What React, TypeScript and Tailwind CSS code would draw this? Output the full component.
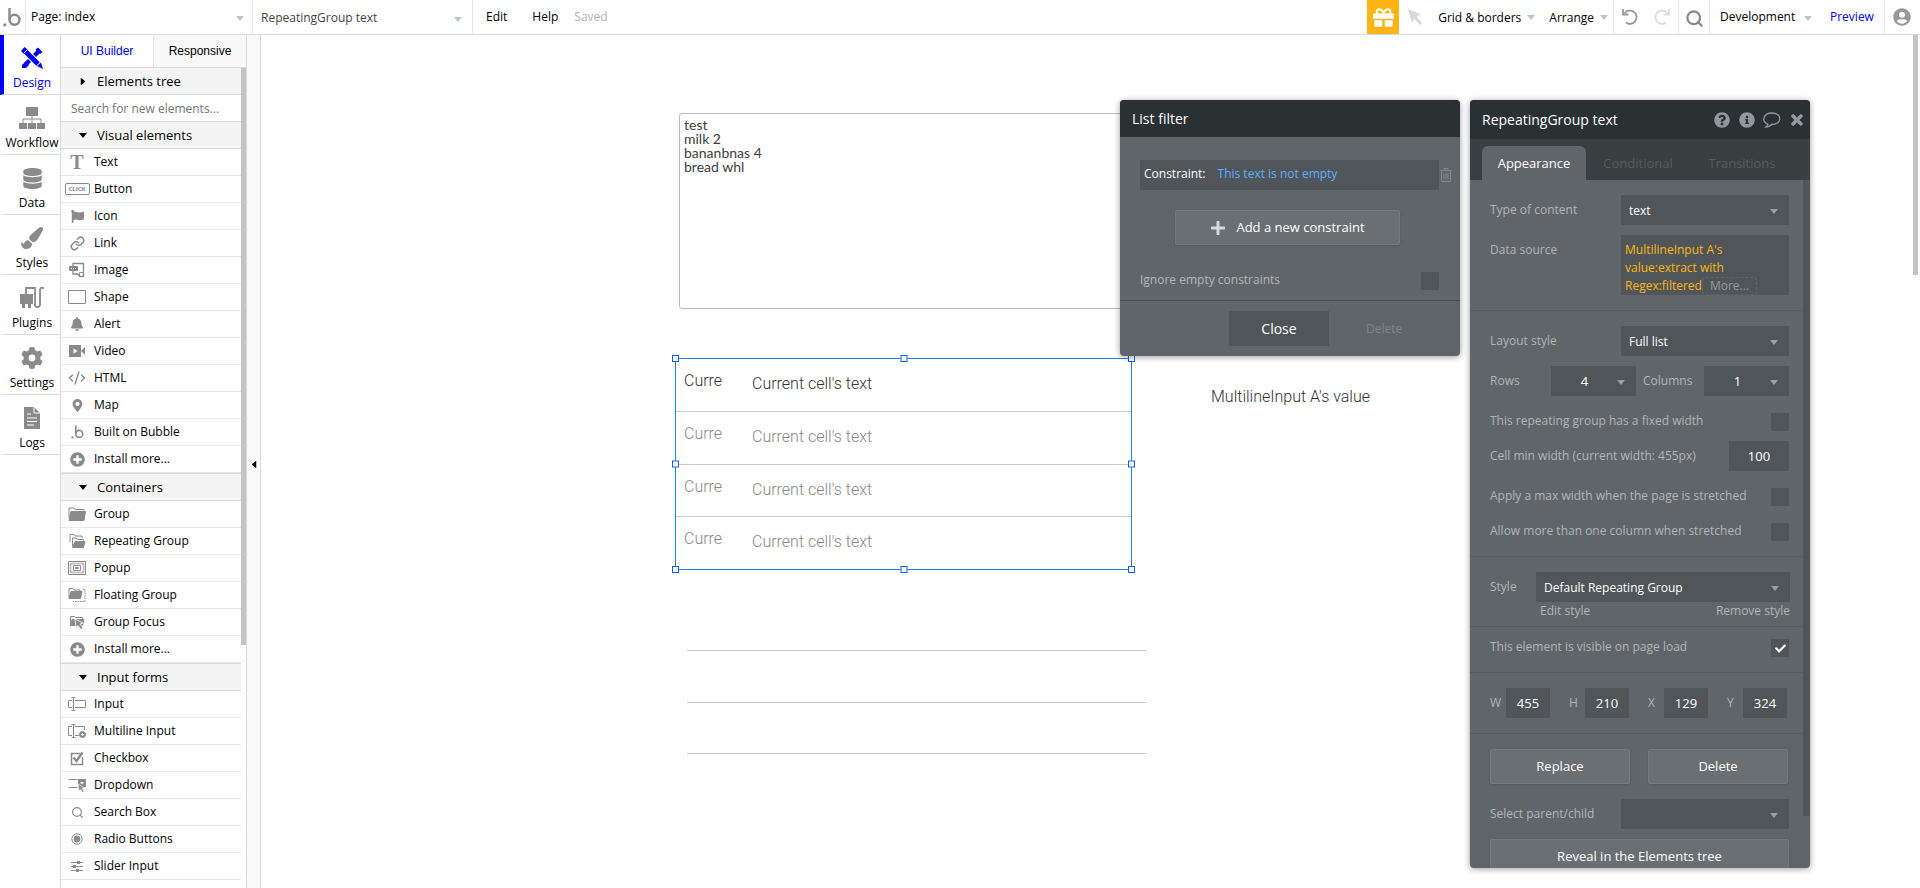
import { ReactNode } from "react";
import {
  FaBell,
  FaCheck,
  FaDatabase,
  FaFlag,
  FaGift,
  FaInfoCircle,
  FaMapMarkerAlt,
  FaPaintBrush,
  FaPlus,
  FaPlusCircle,
  FaQuestionCircle,
  FaTimes,
  FaUserCircle,
} from "react-icons/fa";
import { FaGear } from "react-icons/fa6";
import { CodeXml, Link, Search } from "lucide-react";

type ChildrenProps = { children?: ReactNode };

const BubbleLogo = ({ className }: { className: string }) => (
  <svg viewBox="0 0 18 20" className={className} fill="none">
    <path d="M6.5 1v11.5" stroke="currentColor" strokeWidth="2.4" />
    <circle cx="11.5" cy="12.8" r="5" stroke="currentColor" strokeWidth="2.4" />
    <circle cx="1.8" cy="17.8" r="1.6" fill="currentColor" />
  </svg>
);

const Caret = ({ className }: { className: string }) => (
  <svg viewBox="0 0 8 5" className={`h-[5px] w-2 ${className}`}>
    <path d="M0 0h8L4 5z" fill="currentColor" />
  </svg>
);

// ---------- top bar ----------

const ArrowIcon = () => (
  <svg viewBox="0 0 14 16" className="h-4 w-3.5 text-[#d9d9d9]">
    <path d="M0 0l13 5.5-4.5 2.3 5.500 6.200-2.200 2-5.500-6.200L4 14z" fill="currentColor" />
  </svg>
);

const UndoIcon = ({ className }: { className: string }) => (
  <svg viewBox="0 0 16 18" className={`h-[18px] w-4 ${className}`} fill="none">
    <path
      d="M2.500 5.500A6.600 6.600 0 1 1 4 14.500"
      stroke="currentColor"
      strokeWidth="1.800"
    />
    <path d="M1 1v5.500h5.500" stroke="currentColor" strokeWidth="1.800" />
  </svg>
);

const TopBar = () => {
  return (
    <header className="flex h-[35px] shrink-0 items-stretch border-b border-[#dadada] bg-white text-black">
      <a
        href="#home"
        aria-label="Home"
        className="flex w-[26px] items-center border-r border-[#e4e8ea] pl-[3px] text-[#8a8a8a]"
      >
        <BubbleLogo className="h-5 w-[18px]" />
      </a>
      <div className="relative w-[227px] border-r border-[#e4e8ea]">
        <select
          aria-label="Page"
          className="h-full w-full appearance-none pl-[5px] outline-none"
        >
          <option>Page: index</option>
        </select>
        <Caret className="pointer-events-none absolute top-4 right-2 text-[#bcc5cb]" />
      </div>
      <div className="relative w-[220px] border-r border-[#e4e8ea]">
        <select
          aria-label="Element"
          className="h-full w-full appearance-none pt-px pl-2 text-[#444] outline-none"
        >
          <option>RepeatingGroup text</option>
        </select>
        <Caret className="pointer-events-none absolute top-[17px] right-2.5 text-[#bcc5cb]" />
      </div>
      <button className="pl-[13px]">Edit</button>
      <button className="pl-[25px]">Help</button>
      <span className="self-center pl-4 text-[#b3b3b3]">Saved</span>

      <div className="ml-auto flex items-stretch">
        <button
          aria-label="Rewards"
          className="flex w-8 items-center justify-center bg-[#fdb515] text-white"
        >
          <FaGift size={21} />
        </button>
        <button aria-label="Select" className="pr-4 pl-[9px]">
          <ArrowIcon />
        </button>
        <button className="flex items-center gap-1.5 pt-px">
          Grid &amp; borders <Caret className="text-[#bcc5cb]" />
        </button>
        <button className="flex items-center gap-1.5 border-r border-[#e4e8ea] pt-px pr-[5px] pl-3.5">
          Arrange <Caret className="text-[#bcc5cb]" />
        </button>
        <div className="flex w-[65px] items-center gap-4 border-r border-[#e4e8ea] pl-2">
          <button aria-label="Undo">
            <UndoIcon className="text-[#999]" />
          </button>
          <button aria-label="Redo">
            <UndoIcon className="-scale-x-100 text-[#dcdcdc]" />
          </button>
        </div>
        <button
          aria-label="Search"
          className="flex w-[31px] items-center justify-center border-r border-[#e4e8ea] pt-0.5 text-[#8a8a8a]"
        >
          <Search size={19} strokeWidth={2.8} />
        </button>
        <div className="relative w-[110px]">
          <select
            aria-label="Version"
            className="h-full w-full appearance-none pl-2.5 outline-none"
          >
            <option>Development</option>
          </select>
          <Caret className="pointer-events-none absolute top-4 right-2 text-[#bcc5cb]" />
        </div>
        <a
          href="#preview"
          className="flex w-[65px] items-center border-r border-[#e4e8ea] pl-2.5 text-[#0000ee]"
        >
          Preview
        </a>
        <button aria-label="Account" className="w-[35px] pl-2 text-[#999]">
          <FaUserCircle size={18} />
        </button>
      </div>
    </header>
  );
};

// ---------- main navigation ----------

const DesignIcon = () => (
  <svg viewBox="0 0 24 24" className="h-6 w-6" fill="none">
    <path d="M6 18L19 5" stroke="currentColor" strokeWidth="4.500" />
    <path d="M2 19l3.500-3.500 3.500 3.500L6 22H2z" fill="currentColor" />
    <path d="M18 1.500l4.500 4.500-2.500 2-4.500-4.500z" fill="currentColor" />
    <path d="M4 4l15 15" stroke="#fff" strokeWidth="7" />
    <path d="M5 5l13 13" stroke="currentColor" strokeWidth="5" />
    <path d="M1 5l3.500-4 3 2.500L4 8z" fill="currentColor" />
    <path d="M17 20l4-3.500 2 6.500z" fill="currentColor" />
    <path d="M3.500 7.500l4-4" stroke="#fff" />
  </svg>
);

const WorkflowIcon = () => (
  <svg viewBox="0 0 28 24" className="h-6 w-7" fill="none">
    <path d="M8 1h12v9H8zM1 17h8v6H1zM10 17h8v6h-8zM19 17h8v6h-8z" fill="currentColor" />
    <path d="M14 10v7M5 17v-4h18v4" stroke="currentColor" />
  </svg>
);

const PluginsIcon = () => (
  <svg viewBox="0 0 26 24" className="h-6 w-[26px]" fill="none">
    <path d="M1 8h13v10h-2v4H9v-4H6v4H3v-4H1z" fill="currentColor" />
    <path
      d="M7 8V2h9v16.500a2.500 2.500 0 0 0 5 0V4c0-3 3-2 4-2"
      stroke="currentColor"
      strokeWidth="1.800"
    />
  </svg>
);

const LogsIcon = () => (
  <svg viewBox="0 0 18 22" className="h-[22px] w-[18px]" fill="none">
    <path d="M1 0h10l6 6v16H1z" fill="currentColor" />
    <path d="M11 0v6h6M4 7h4M4 11h10M4 14.500h10M4 18h7" stroke="#fff" />
  </svg>
);

const navItems = [
  { label: "Design", icon: <DesignIcon /> },
  { label: "Workflow", icon: <WorkflowIcon /> },
  { label: "Data", icon: <FaDatabase size={21} /> },
  { label: "Styles", icon: <FaPaintBrush size={22} /> },
  { label: "Plugins", icon: <PluginsIcon /> },
  { label: "Settings", icon: <FaGear size={22} /> },
  { label: "Logs", icon: <LogsIcon /> },
];

const MainNav = () => {
  return (
    <nav className="w-[61px] shrink-0 border-r border-[#dadada] bg-white">
      {navItems.map((item, index) => (
        <a
          key={item.label}
          href={`#${item.label.toLowerCase()}`}
          className={`flex h-[60px] flex-col items-center justify-end border-b border-l-4 border-b-[#dadada] pb-0.5 ${
            index === 0
              ? "border-l-[#0000ee] text-[#0000ee]"
              : "border-l-transparent text-[#8a8a8a]"
          }`}
        >
          <span className="flex h-6 items-center">{item.icon}</span>
          <span className={`mt-1 leading-[18px] ${index === 0 ? "" : "text-black"}`}>
            {item.label}
          </span>
        </a>
      ))}
    </nav>
  );
};

// ---------- element palette ----------

const Glyph = ({ children }: ChildrenProps) => (
  <svg viewBox="0 0 18 16" className="h-4 w-[18px]" fill="none" stroke="currentColor">
    {children}
  </svg>
);

const visualElements = [
  {
    label: "Text",
    icon: (
      <span className="font-['Liberation_Serif',serif] text-xl leading-none font-bold">
        T
      </span>
    ),
  },
  {
    label: "Button",
    icon: (
      <span className="h-3 w-[25px] rounded-xs border border-[#8a8a8a] text-center text-[6px] leading-[10px] font-bold">
        CLICK
      </span>
    ),
  },
  { label: "Icon", icon: <FaFlag size={13} /> },
  { label: "Link", icon: <Link size={15} strokeWidth={2.4} /> },
  {
    label: "Image",
    icon: (
      <Glyph>
        <path d="M5 4V1.500h10.500v13H12l-3-3M5 9v3h4.500" strokeWidth="1.300" />
        <path d="M11.500 14.500v-4h4" />
        <path d="M1.500 4.500h8v4h-8z" fill="currentColor" />
        <path d="M3 6.500h1M5 6.500h1M7 6.500h1" stroke="#fff" />
      </Glyph>
    ),
  },
  {
    label: "Shape",
    icon: (
      <Glyph>
        <path d="M.5 1.500h17v13H.5z" />
      </Glyph>
    ),
  },
  { label: "Alert", icon: <FaBell size={14} /> },
  {
    label: "Video",
    icon: (
      <Glyph>
        <path d="M1 2h12v12H1zM13 8l4-4v8z" fill="currentColor" stroke="none" />
        <path d="M5.500 5.500l4 2.500-4 2.500z" fill="#fff" stroke="none" />
      </Glyph>
    ),
  },
  { label: "HTML", icon: <CodeXml size={18} strokeWidth={1.8} /> },
  { label: "Map", icon: <FaMapMarkerAlt size={13} /> },
  { label: "Built on Bubble", icon: <BubbleLogo className="h-3.5 w-[13px]" /> },
  { label: "Install more...", icon: <FaPlusCircle size={15} /> },
];

const containers = [
  {
    label: "Group",
    icon: (
      <Glyph>
        <path d="M1 12V2h5l1 1.500h9V6" />
        <path d="M3 5.500h14.500L16 14.500H1z" fill="currentColor" />
      </Glyph>
    ),
  },
  {
    label: "Repeating Group",
    icon: (
      <Glyph>
        <path d="M2 9V1.500h4l1 1.500h7v2" />
        <path d="M4.500 13V5h4l1 1.500h6v2" />
        <path d="M7 8.500h10l-1.500 6H4.500z" fill="currentColor" />
      </Glyph>
    ),
  },
  {
    label: "Popup",
    icon: (
      <Glyph>
        <path d="M.5 1.500h17v13H.5z" />
        <path d="M2.500 3.500h13v9h-13z" strokeDasharray="1 1" strokeWidth="2" />
        <path d="M5.500 5.500h7v5h-7zM7.500 7.500h3v1h-3z" />
      </Glyph>
    ),
  },
  {
    label: "Floating Group",
    icon: (
      <Glyph>
        <path d="M1 11V1.500h4l1 1.500h6V5" />
        <path d="M3 4.500h11l-1.500 7H1z" fill="currentColor" />
        <path d="M15 2.500h2v12H5V13" strokeDasharray="1.500 1" />
      </Glyph>
    ),
  },
  {
    label: "Group Focus",
    icon: (
      <Glyph>
        <path d="M2.500 11V2.500h4l1 1h7V6" />
        <path d="M4 5.500h12l-1.500 6H2.500z" fill="currentColor" />
        <path
          d="M7 5l8 4-3 1 3 4-2 1.500-3-4-2 2z"
          fill="currentColor"
          stroke="#fff"
          strokeWidth=".8"
        />
      </Glyph>
    ),
  },
  { label: "Install more...", icon: <FaPlusCircle size={15} /> },
];

const inputForms = [
  {
    label: "Input",
    icon: (
      <Glyph>
        <path d="M4 4.500H.5v7H4M7 4.500h10.500v7H7M3.500 1.500h4M3.500 14.500h4M5.500 1.500v13" />
      </Glyph>
    ),
  },
  {
    label: "Multiline Input",
    icon: (
      <Glyph>
        <path d="M4 3.500H.5v9H4M7 3.500h9.500V7M7 12.500h4M3.500 1.500h4M3.500 14.500h4M5.500 1.500v13" />
        <circle cx="14.500" cy="11.500" r="3" fill="currentColor" />
        <path d="M13 11.500h3M14.500 10v3" stroke="#fff" />
      </Glyph>
    ),
  },
  {
    label: "Checkbox",
    icon: (
      <Glyph>
        <path d="M14.500 7v7.500h-11v-11h9" strokeWidth="1.500" />
        <path d="M5.500 7.500L8.500 11l6-8.500" strokeWidth="2.400" />
      </Glyph>
    ),
  },
  {
    label: "Dropdown",
    icon: (
      <Glyph>
        <path d="M.5 2.500h9M.5 10.500h9" />
        <path d="M10 2h8v8h-8z" fill="currentColor" stroke="none" />
        <path d="M12 5h4l-2 2.500z" fill="#fff" stroke="none" />
        <path
          d="M10 7l6 4-2 .5 2 3-1.500 1-2-3-1.500 1.500z"
          fill="currentColor"
          stroke="#fff"
          strokeWidth=".6"
        />
      </Glyph>
    ),
  },
  { label: "Search Box", icon: <Search size={13} strokeWidth={2.2} /> },
  {
    label: "Radio Buttons",
    icon: (
      <Glyph>
        <circle cx="9" cy="8" r="5.200" />
        <circle cx="9" cy="8" r="3" fill="currentColor" />
      </Glyph>
    ),
  },
  {
    label: "Slider Input",
    icon: (
      <Glyph>
        <path d="M3 4.500h12M3 8.500h12M3 12.500h12" />
        <path d="M9 3h3v3H9zM5 7h3v3H5zM8 11h3v3H8z" fill="currentColor" stroke="none" />
      </Glyph>
    ),
  },
];

type PaletteGroupProps = {
  title: string;
  items: { label: string; icon: ReactNode }[];
};

const PaletteGroup = ({ title, items }: PaletteGroupProps) => {
  return (
    <section>
      <button className="flex h-7 w-full items-center gap-2.5 border-y border-[#dadada] bg-[#f4f4f4] pt-px pl-[18px] text-[13px]">
        <Caret className="text-black" />
        {title}
      </button>
      <ul>
        {items.map((item) => (
          <li
            key={item.label}
            className="flex h-[27px] items-center gap-1 border-b border-[#e8e8e8] pl-[3px]"
          >
            <span className="flex w-[26px] items-center justify-center text-[#8a8a8a]">
              {item.icon}
            </span>
            {item.label}
          </li>
        ))}
      </ul>
    </section>
  );
};

const Palette = () => {
  return (
    <aside className="flex w-[186px] shrink-0 flex-col border-r border-[#dadada] bg-white text-black">
      <div className="flex h-[33px] shrink-0 border-b border-[#dadada] font-['Liberation_Sans',sans-serif]">
        <button className="w-[93px] border-r border-[#e4e4e4] text-[#0000ee]">
          UI Builder
        </button>
        <button className="flex-1 bg-[#f8f8f8]">Responsive</button>
      </div>
      <div className="flex min-h-0 flex-1 overflow-hidden">
        <div className="flex-1">
          <button className="flex h-[27px] w-full items-center gap-2.5 border-b border-[#dadada] bg-[#f4f4f4] pt-px pl-[18px] text-[13px]">
            <Caret className="-rotate-90 text-black" />
            Elements tree
          </button>
          <input
            type="search"
            aria-label="Search for new elements"
            placeholder="Search for new elements..."
            className="h-[26px] w-full pl-2.5 outline-none placeholder:text-[#757575]"
          />
          <PaletteGroup title="Visual elements" items={visualElements} />
          <PaletteGroup title="Containers" items={containers} />
          <PaletteGroup title="Input forms" items={inputForms} />
        </div>
        <div className="h-[577px] w-[5px] bg-[#c4c4c4]" />
      </div>
    </aside>
  );
};

// ---------- page canvas ----------

const handles = [
  "-top-1 -left-1",
  "-top-1 left-1/2 -translate-x-1/2",
  "-top-1 -right-1",
  "top-1/2 -left-1 -translate-y-1/2",
  "top-1/2 -right-1 -translate-y-1/2",
  "-bottom-1 -left-1",
  "-bottom-1 left-1/2 -translate-x-1/2",
  "-bottom-1 -right-1",
];

const RepeatingGroup = () => {
  return (
    <div className="absolute top-[323px] left-[414px] flex h-[212px] w-[457px] flex-col border border-[#1a86e0] text-base leading-5 font-light">
      {[0, 1, 2, 3].map((row) => (
        <div
          key={row}
          className={`flex flex-1 border-[#c8c8c8] pt-3 pl-2 ${
            row === 0 ? "text-[#333]" : "border-t text-[#888]"
          }`}
        >
          <span className="w-[68px]">Curre</span>
          <span className="pt-[3px]">Current cell&apos;s text</span>
        </div>
      ))}
      {handles.map((place) => (
        <span
          key={place}
          className={`absolute h-[7px] w-[7px] border border-[#0f62fe] bg-white ${place}`}
        />
      ))}
    </div>
  );
};

// ---------- property editors ----------

const fieldStyle = "rounded-[1px] bg-[#505559] font-medium text-white outline-none";
const raisedStyle =
  "h-[35px] rounded-xs border border-[#74797d] bg-[#6a6f73] text-[13px] font-medium text-white shadow-sm";

type SelectProps = {
  label: string;
  value: string;
  className: string;
  center?: boolean;
};

const Select = ({ label, value, className, center }: SelectProps) => {
  return (
    <div className={`relative h-[30px] ${className}`}>
      <select
        id={label}
        className={`h-full w-full appearance-none pt-px ${fieldStyle} ${
          center ? "pr-[18px] text-center text-[13px]" : "pl-2"
        }`}
      >
        <option>{value}</option>
      </select>
      <Caret className="pointer-events-none absolute top-3.5 right-[11px] text-[#9ba0a3]" />
    </div>
  );
};

type CheckRowProps = { label: string; checked?: boolean };

const CheckRow = ({ label, checked }: CheckRowProps) => {
  return (
    <label className="flex h-[18px] items-center justify-between">
      <span className="pb-0.5">{label}</span>
      <span className="relative h-[18px] w-[18px]">
        <input
          type="checkbox"
          defaultChecked={checked}
          className="block h-[18px] w-[18px] appearance-none rounded-[1px] bg-[#505559]"
        />
        {checked && (
          <FaCheck
            size={11}
            className="pointer-events-none absolute top-1 left-1 text-white"
          />
        )}
      </span>
    </label>
  );
};

const TrashIcon = () => (
  <svg viewBox="0 0 12 14" className="h-3.5 w-3" fill="none" stroke="currentColor">
    <path d="M0 2.500h12M4 2.500v-2h4v2M1.500 3v10.500h9V3M4 5v6.500M6 5v6.500M8 5v6.500" />
  </svg>
);

const ListFilter = () => {
  return (
    <section className="absolute top-[65px] right-[460px] w-[340px] overflow-hidden rounded-[4px] bg-[#606569] text-[#b1b5b8] shadow-[0_1px_6px_rgba(0,0,0,0.4)]">
      <h2 className="flex h-[37px] items-center bg-[#293133] pt-px pl-3 text-sm text-white">
        List filter
      </h2>
      <div className="pt-[23px] pr-[21px] pb-2.5 pl-5">
        <div className="-mr-[13px] flex items-center">
          <div className="flex h-[30px] flex-1 items-start gap-3 bg-[#505559] px-1 pt-1.5">
            <span className="font-medium text-white">Constraint:</span>
            <a href="#constraint" className="text-[#5fb0ff]">
              This text is not empty
            </a>
          </div>
          <button aria-label="Delete constraint" className="pl-px text-[#81868a]">
            <TrashIcon />
          </button>
        </div>
        <button
          className={`mt-5 ml-[35px] flex w-[225px] items-center justify-center gap-2.5 ${raisedStyle}`}
        >
          <FaPlus size={16} className="text-[#d6d8d9]" />
          Add a new constraint
        </button>
        <div className="mt-[27px]">
          <CheckRow label="Ignore empty constraints" />
        </div>
      </div>
      <div className="flex border-t border-[#4e4c4e] py-2.5 pl-[109px]">
        <button className="h-[35px] w-[100px] bg-[#505559] text-sm text-white">
          Close
        </button>
        <button className="pl-[37px] text-[#7f8488]">Delete</button>
      </div>
    </section>
  );
};

const Section = ({ children }: ChildrenProps) => (
  <div className="border-b border-[#565b5f] py-[15px] pr-3.5 pl-5">{children}</div>
);

const NumberField = ({ label, value }: { label: string; value: string }) => (
  <label className="flex items-center">
    <span className="w-4">{label}</span>
    <input
      defaultValue={value}
      className={`h-[30px] w-11 text-center text-[13px] ${fieldStyle}`}
    />
  </label>
);

const PropertyEditor = () => {
  return (
    <section className="absolute top-[65px] right-[110px] bottom-5 flex w-[340px] flex-col overflow-hidden rounded-[4px] bg-[#606569] text-[#b1b5b8] shadow-[0_1px_6px_rgba(0,0,0,0.4)]">
      <div className="flex h-[39px] shrink-0 items-center bg-[#293133] pt-px pr-[5px] pl-3 text-[#90989b]">
        <h2 className="flex-1 text-sm text-white">RepeatingGroup text</h2>
        <button aria-label="Help" className="mr-[9px]">
          <FaQuestionCircle size={16} />
        </button>
        <button aria-label="Info" className="mr-2">
          <FaInfoCircle size={16} />
        </button>
        <button aria-label="Comment" className="mr-2">
          <svg viewBox="0 0 18 16" className="h-4 w-[18px]" fill="none">
            <path
              d="M5 12.300C-2.500 9 .8 1 9 1c10.500 0 10.500 11.500-.5 11.500-1.500 2-3.500 2.500-5.500 2.500 1.300-1 1.800-1.500 2-2.700z"
              stroke="currentColor"
              strokeWidth="1.300"
            />
          </svg>
        </button>
        <button aria-label="Close">
          <FaTimes size={16} stroke="currentColor" strokeWidth={30} />
        </button>
      </div>
      <div className="flex h-[41px] shrink-0 items-end bg-[#3a3f42] pl-3 text-[13px] text-[#555b5f]">
        <button className="h-[34px] w-[104px] rounded-t-md bg-[#606569] pt-0.5 font-medium text-white">
          Appearance
        </button>
        <button className="h-[34px] w-[104px] pt-0.5">Conditional</button>
        <button className="h-[34px] w-[104px] pt-0.5">Transitions</button>
      </div>

      <div className="flex min-h-0 flex-1 overflow-hidden">
        <div className="flex-1">
          <Section>
            <div className="flex items-center justify-between">
              <label htmlFor="content-type">Type of content</label>
              <Select label="content-type" value="text" className="w-[168px]" />
            </div>
            <div className="mt-2.5 flex justify-between">
              <span className="pt-[7px]">Data source</span>
              <div className="h-[60px] w-[168px] bg-[#505559] pt-1.5 pl-1 leading-[18px] font-medium text-[#fdb515]">
                MultilineInput A&apos;s
                <br />
                value:extract with
                <br />
                Regex:filtered
                <button className="rounded-sm border border-dashed border-[#5f6468] px-[7px] leading-4 font-normal text-[#94999c]">
                  More...
                </button>
              </div>
            </div>
          </Section>
          <Section>
            <div className="flex items-center justify-between">
              <label htmlFor="layout-style">Layout style</label>
              <Select label="layout-style" value="Full list" className="w-[168px]" />
            </div>
            <div className="mt-2.5 flex items-center">
              <label htmlFor="rows" className="w-[61px]">
                Rows
              </label>
              <Select label="rows" value="4" className="w-[85px]" center />
              <label htmlFor="columns" className="ml-[7px] flex-1">
                Columns
              </label>
              <Select label="columns" value="1" className="w-[85px]" center />
            </div>
            <div className="mt-[17px]">
              <CheckRow label="This repeating group has a fixed width" />
            </div>
            <label className="mt-2.5 flex items-center justify-between">
              Cell min width (current width: 455px)
              <input
                defaultValue="100"
                className={`h-[30px] w-[60px] text-center text-[13px] ${fieldStyle}`}
              />
            </label>
            <div className="mt-[17px] space-y-[17px]">
              <CheckRow label="Apply a max width when the page is stretched" />
              <CheckRow label="Allow more than one column when stretched" />
            </div>
          </Section>
          <div className="border-b border-[#565b5f] pt-[15px] pr-[13px] pb-1.5 pl-5">
            <div className="flex items-center justify-between">
              <label htmlFor="style">Style</label>
              <Select
                label="style"
                value="Default Repeating Group"
                className="w-[254px]"
              />
            </div>
            <div className="flex justify-between pl-[50px] leading-[18px]">
              <button>Edit style</button>
              <button>Remove style</button>
            </div>
          </div>
          <div className="border-b border-[#565b5f] pt-3 pr-3.5 pb-[15px] pl-5">
            <CheckRow label="This element is visible on page load" checked />
          </div>
          <Section>
            <div className="flex justify-between pr-0.5">
              <NumberField label="W" value="455" />
              <NumberField label="H" value="210" />
              <NumberField label="X" value="129" />
              <NumberField label="Y" value="324" />
            </div>
          </Section>
          <div className="pt-[15px] pr-3.5 pl-5">
            <div className="flex gap-[18px] pr-px">
              <button className={`flex-1 ${raisedStyle}`}>Replace</button>
              <button className={`flex-1 ${raisedStyle}`}>Delete</button>
            </div>
            <div className="mt-[15px] flex items-center justify-between">
              <label htmlFor="parent">Select parent/child</label>
              <Select label="parent" value="" className="w-[168px]" />
            </div>
            <button className={`mt-2.5 w-full ${raisedStyle}`}>
              Reveal in the Elements tree
            </button>
          </div>
        </div>
        <div className="h-[636px] w-[7px] bg-[#505559]" />
      </div>
    </section>
  );
};

const Canvas = () => {
  return (
    <main className="relative flex-1 overflow-hidden bg-white font-['Open_Sans',sans-serif]">
      <textarea
        aria-label="MultilineInput A"
        defaultValue={"test\nmilk 2\nbananbnas 4\nbread whl"}
        className="absolute top-[78px] left-[418px] h-[196px] w-[455px] resize-none rounded-[3px] border border-[#bbb] px-1 py-1 font-['Lato',sans-serif] text-sm leading-[14px] text-[#3d3d3d] outline-none"
      />
      <div className="font-['Roboto',sans-serif]">
        <RepeatingGroup />
        <p className="absolute top-[352px] left-[950px] text-base leading-5 font-light text-[#333]">
          MultilineInput A&apos;s value
        </p>
      </div>
      <div className="absolute top-[615px] left-[426px] h-[104px] w-[459px] divide-y divide-[#c8c8c8] border-y border-[#c8c8c8]">
        <div className="h-[52px]" />
        <div />
      </div>
      <ListFilter />
      <PropertyEditor />
      <div className="absolute top-0 right-0.5 h-60 w-[5px] bg-[#c4c4c4]" />
    </main>
  );
};

const App = () => {
  return (
    <div className="flex h-screen flex-col overflow-hidden bg-white font-['Open_Sans',sans-serif] text-xs">
      <TopBar />
      <div className="flex min-h-0 flex-1">
        <MainNav />
        <Palette />
        <button
          aria-label="Collapse panel"
          className="flex w-3.5 shrink-0 items-center justify-center border-r border-[#dadada] bg-[#f9f9f9] pt-1.5"
        >
          <Caret className="rotate-90 text-black" />
        </button>
        <Canvas />
      </div>
    </div>
  );
};

export default App;
